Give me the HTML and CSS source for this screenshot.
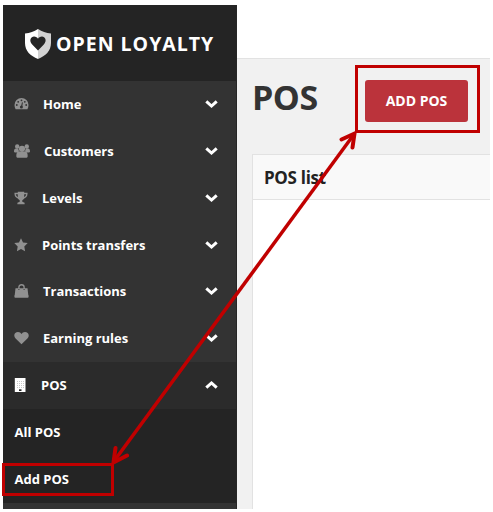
FILE: index.html
```html
<!DOCTYPE html>
<html lang="en">
<head>
<meta charset="utf-8">
<title>Open Loyalty</title>
<link rel="stylesheet" href="styles.css">
</head>
<body>
<div class="app">
  <aside class="sidebar">
    <div class="brand">
      <svg class="shield" viewBox="0 0 26 30">
        <path fill="#fff" d="M13 0C9 2.500 5 4 0 4.500V14c0 8 5.500 13 13 16z"/>
        <path fill="#d2d2d2" d="M13 0c4 2.500 8 4 13 4.500V14c0 8-5.500 13-13 16z"/>
        <path fill="#242424" d="M13 21.500 7.200 15.500C3.500 11.500 6 7.500 9 7.500c2 0 3.300 1 4 2.200.7-1.200 2-2.200 4-2.200 3 0 5.500 4 1.800 8z"/>
      </svg>
      <span class="brand-name">OPEN LOYALTY</span>
    </div>
    <nav>
      <a class="item"><svg class="icon" viewBox="0 0 15 14"><path d="M.5 8a7 7 0 0 1 14 0c0 1.600-.4 3-1.100 4.200H1.600A8 8 0 0 1 .5 8z"/><g fill="#333"><circle cx="2.800" cy="8" r=".9"/><circle cx="4.200" cy="4.800" r=".9"/><circle cx="7.500" cy="3.300" r=".9"/><circle cx="10.800" cy="4.800" r=".9"/><circle cx="12.200" cy="8" r=".9"/><circle cx="7.400" cy="10" r="1.500"/><path d="m7 9.500 1-4.300.9.200-.7 4.300z"/></g></svg><span class="label home">Home</span><svg class="chevron" viewBox="0 0 13 8"><path d="m1.300 1.300 5.200 4.700 5.200-4.700"/></svg></a>
      <a class="item"><svg class="icon wide" viewBox="0 0 16 14"><circle cx="3.200" cy="2.500" r="2.200"/><circle cx="12.800" cy="2.500" r="2.200"/><path d="M0 7.800C0 5.500.7 4.600 2 4.600h2.200L5 7.200 3.200 8.400H1.200C.4 8.400 0 8.200 0 7.800zM16 7.800c0-2.300-.7-3.200-2-3.200h-2.200L11 7.200l1.800 1.200h2c.8 0 1.200-.2 1.200-.6z"/><circle cx="8" cy="4.800" r="3.100"/><path d="M2.300 11.900c0-3 1-4.700 2.900-4.700 1.600 1 4 1 5.600 0 1.900 0 2.900 1.700 2.900 4.700 0 1.200-.7 1.900-2 1.900H4.300c-1.300 0-2-.7-2-1.900z"/></svg><span class="label customers">Customers</span><svg class="chevron" viewBox="0 0 13 8"><path d="m1.300 1.300 5.200 4.700 5.200-4.700"/></svg></a>
      <a class="item"><svg class="icon" viewBox="0 0 15 14"><path d="M3.800.8h6.400v7L8.300 9.200v1.600l2.300.9v1.600H3.400v-1.600l2.300-.9V9.200L3.800 7.800z"/><path fill="none" stroke="#919191" stroke-width="1.300" d="M4 2.500H1.100c0 2.600 1.200 4 3.900 4.500M10 2.500h2.900c0 2.600-1.200 4-3.900 4.500"/></svg><span class="label levels">Levels</span><svg class="chevron" viewBox="0 0 13 8"><path d="m1.300 1.300 5.200 4.700 5.200-4.700"/></svg></a>
      <a class="item"><svg class="icon" viewBox="0 0 15 14"><path d="m7 .3 2 4.200 4.700.6-3.400 3.400.8 4.800L7 11l-4.100 2.300.8-4.800L.3 5.100 5 4.500z"/></svg><span class="label points">Points transfers</span><svg class="chevron" viewBox="0 0 13 8"><path d="m1.300 1.300 5.200 4.700 5.200-4.700"/></svg></a>
      <a class="item"><svg class="icon" viewBox="0 0 15 14"><path d="M1.500 4.200h12l.8 7H.7zM.4 11.200h14.200v1.600c0 .6-.3.900-.9.900H1.300c-.6 0-.9-.3-.9-.9z"/><path fill="none" stroke="#919191" stroke-width="1.300" d="M4.900 5V3c0-3 5.200-3 5.200 0v2"/><circle cx="4.900" cy="5.500" r=".6" fill="#333"/><circle cx="10.100" cy="5.500" r=".6" fill="#333"/></svg><span class="label transactions">Transactions</span><svg class="chevron" viewBox="0 0 13 8"><path d="m1.300 1.300 5.200 4.700 5.200-4.700"/></svg></a>
      <a class="item"><svg class="icon" viewBox="0 0 15 14"><path d="M7.500 13.200 1.600 7.500C-1.200 4.500.8 1 4 1c1.700 0 2.700.8 3.500 1.900C8.300 1.800 9.300 1 11 1c3.200 0 5.200 3.500 2.400 6.500z"/></svg><span class="label earning">Earning rules</span><svg class="chevron" viewBox="0 0 13 8"><path d="m1.300 1.300 5.200 4.700 5.200-4.700"/></svg></a>
      <a class="item open"><svg class="icon" viewBox="0 0 15 14"><path fill="#fff" d="M.8 0h10.700v14H.8z"/><path stroke="#c8c8c8" stroke-dasharray="1 1" d="M3 3.500h7M3 5.500h7M3 7.500h7M3 9.500h7"/><path fill="#292929" d="M5 11.300h2.500V13H5z"/></svg><span class="label pos">POS</span><svg class="chevron" viewBox="0 0 13 8"><path d="m1.300 6.700 5.200-4.700 5.200 4.700"/></svg></a>
      <div class="submenu">
        <a class="subitem">All POS</a>
        <a class="subitem">Add POS</a>
      </div>
    </nav>
  </aside>
  <main class="main">
    <div class="topbar"></div>
    <div class="page">
      <header class="page-head">
        <h1>POS</h1>
        <button class="add">ADD POS</button>
      </header>
      <section class="panel"><h2>POS list</h2></section>
    </div>
  </main>
</div>
<svg class="annotation" viewBox="0 0 493 512">
  <rect x="356.500" y="66.500" width="122" height="65"/>
  <rect x="3.500" y="464.500" width="109" height="30"/>
  <path class="shaft" d="M114.500 460.500 353.500 135"/>
  <path class="tip" d="M341.500 139.500 354.500 133.500 352.500 147.500M115.500 448 113.500 462.500 127 455.500"/>
</svg>
</body>
</html>
```

FILE: styles.css
```css
* { box-sizing: border-box; }
body {
  margin: 0;
  width: 493px;
  height: 512px;
  overflow: hidden;
  background: #fff;
  font-family: "Open Sans", sans-serif;
}
.app {
  display: flex;
  width: 490px;
  height: 509px;
  padding: 5px 0 0 3px;
}
.sidebar {
  width: 234px;
  background: #333;
  border-right: 1px solid #262626;
  overflow: hidden;
}
.brand {
  display: flex;
  align-items: center;
  height: 76px;
  padding: 2px 0 0 22px;
  background: #242424;
}
.shield { width: 26px; height: 30px; }
.brand-name {
  margin-left: 5px;
  color: #fff;
  font: 700 19.500px/24px "Open Sans", sans-serif;
  letter-spacing: 1px;
  white-space: nowrap;
}
.item {
  display: flex;
  align-items: center;
  height: 46.860px;
  padding: 0 18px 1px 11px;
  color: #fff;
  font-size: 13px;
  font-weight: 700;
  letter-spacing: -.02px;
}
.icon { width: 15px; height: 14px; fill: #919191; flex: none; }
.wide { width: 16px; }
.label { flex: 1; white-space: nowrap; }
.home, .transactions, .earning { margin-left: 14px; }
.customers { margin-left: 14px; }
.levels, .points { margin-left: 13px; }
.pos { margin-left: 12px; }
.chevron {
  width: 13px;
  height: 8px;
  fill: none;
  stroke: #fff;
  stroke-width: 3;
  overflow: visible;
}
.open { background: #2b2b2b; }
.submenu { background: #242424; }
.subitem {
  display: flex;
  align-items: center;
  height: 47px;
  padding: 0 0 2px 11.500px;
  color: #fff;
  font-size: 13px;
  font-weight: 700;
}
.main {
  display: flex;
  flex-direction: column;
  flex: 1;
  min-width: 0;
  background: #f1f1f1;
}
.topbar { height: 54px; background: #fff; border-bottom: 1px solid #e2e2e2; }
.page { display: flex; flex-direction: column; flex: 1; padding-left: 15px; }
.page-head { display: flex; height: 95px; padding-top: 21px; }
h1 {
  width: 113px;
  margin: -6px 0 0;
  color: #333;
  font-size: 34px;
  line-height: 47px;
  font-weight: 700;
  letter-spacing: -.5px;
}
.add {
  width: 103px;
  height: 42px;
  padding: 0;
  border: 0;
  border-radius: 3px;
  background: #bb333b;
  color: #fff;
  font: 700 14px/42px "Open Sans", sans-serif;
}
.panel { flex: 1; border: solid #e2e2e2; border-width: 1px 0 0 1px; background: #fff; }
h2 {
  height: 45px;
  margin: 0;
  padding-left: 11px;
  border-bottom: 1px solid #e2e2e2;
  background: #f9f9f9;
  color: #222;
  font-size: 17px;
  line-height: 45px;
  font-weight: 700;
  letter-spacing: -.3px;
}
.annotation {
  position: absolute;
  inset: 0;
  width: 493px;
  height: 512px;
  fill: none;
  stroke: #c00000;
  stroke-width: 3;
}
.shaft { stroke-width: 3.500; }
.tip { stroke-width: 4; stroke-linecap: round; }
```
